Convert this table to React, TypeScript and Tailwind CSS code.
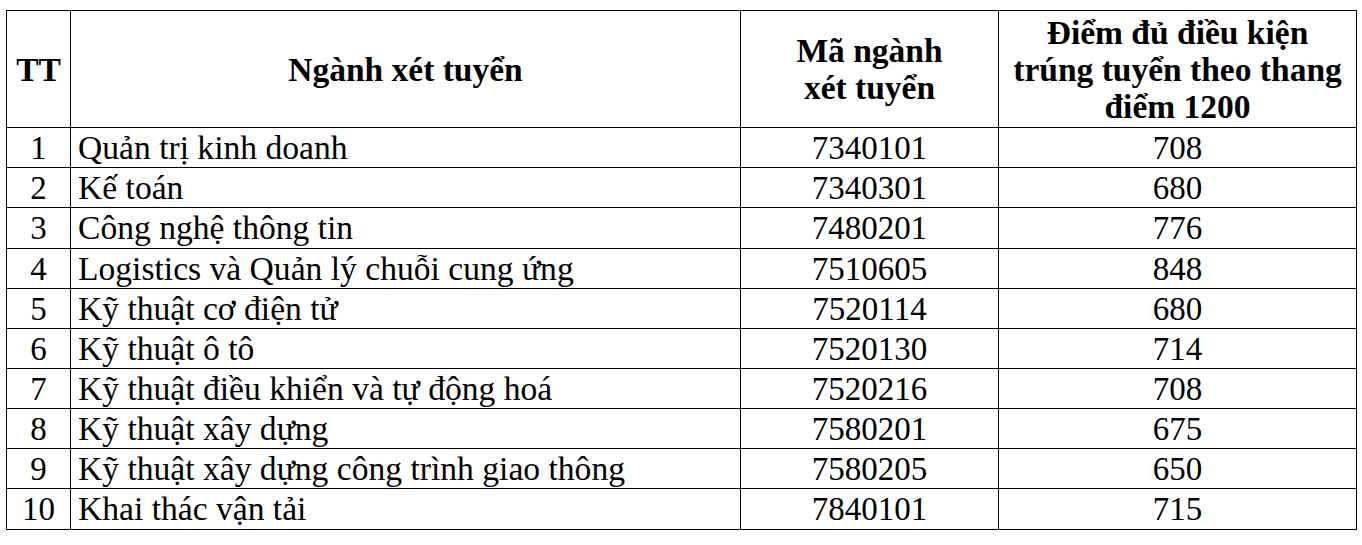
import React from "react";

const rows: [string, string, string, string][] = [
  ["1", "Quản trị kinh doanh", "7340101", "708"],
  ["2", "Kế toán", "7340301", "680"],
  ["3", "Công nghệ thông tin", "7480201", "776"],
  ["4", "Logistics và Quản lý chuỗi cung ứng", "7510605", "848"],
  ["5", "Kỹ thuật cơ điện tử", "7520114", "680"],
  ["6", "Kỹ thuật ô tô", "7520130", "714"],
  ["7", "Kỹ thuật điều khiển và tự động hoá", "7520216", "708"],
  ["8", "Kỹ thuật xây dựng", "7580201", "675"],
  ["9", "Kỹ thuật xây dựng công trình giao thông", "7580205", "650"],
  ["10", "Khai thác vận tải", "7840101", "715"],
];

const heights = ["h-[40px]", "h-[40px]", "h-[41px]", "h-[40px]", "h-[40px]", "h-[40px]", "h-[40px]", "h-[40px]", "h-[40px]", "h-[41px]"];

export default function App() {
  return (
    <div className="w-[1362px] h-[545px] bg-white pt-[10px] pl-[6px] font-['Liberation_Serif',serif] text-black">
      <table className="border-collapse table-fixed w-[1350px] text-[33px]">
        <colgroup>
          <col className="w-[64px]" />
          <col className="w-[670px]" />
          <col className="w-[258px]" />
          <col className="w-[358px]" />
        </colgroup>
        <thead>
          <tr className="h-[117px] font-bold leading-[37px] text-[33.5px]">
            <th className="border border-black p-0 text-center align-middle">TT</th>
            <th className="border border-black p-0 text-center align-middle">Ngành xét tuyển</th>
            <th className="border border-black p-0 text-center align-middle">
              Mã ngành
              <br />
              xét tuyển
            </th>
            <th className="border border-black p-0 text-center align-middle">
              Điểm đủ điều kiện
              <br />
              trúng tuyển theo thang
              <br />
              điểm 1200
            </th>
          </tr>
        </thead>
        <tbody>
          {rows.map((r, i) => (
            <tr key={r[0]} className={`${heights[i]} leading-[36px]`}>
              <td className="border border-black p-0 text-center align-middle">{r[0]}</td>
              <td className="border border-black py-0 pl-[7px] pr-0 text-left align-middle whitespace-nowrap text-[33.6px]">{r[1]}</td>
              <td className="border border-black p-0 text-center align-middle">{r[2]}</td>
              <td className="border border-black p-0 text-center align-middle">{r[3]}</td>
            </tr>
          ))}
        </tbody>
      </table>
    </div>
  );
}
